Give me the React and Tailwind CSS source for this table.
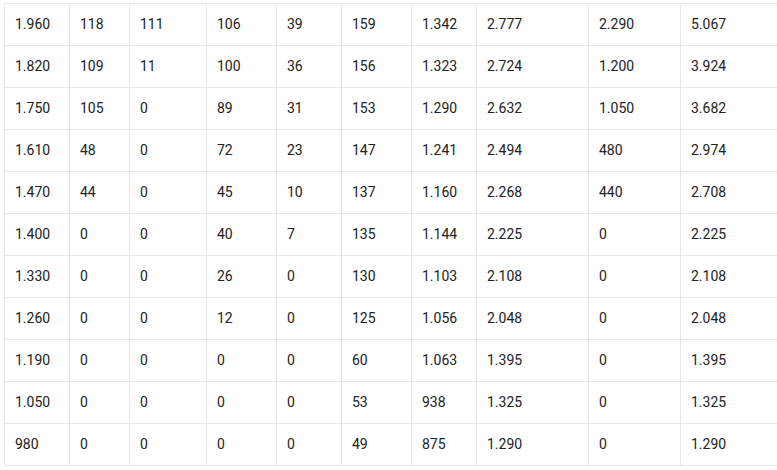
import React from 'react';

const rows = [
  ['1.960', '118', '111', '106', '39', '159', '1.342', '2.777', '2.290', '5.067'],
  ['1.820', '109', '11', '100', '36', '156', '1.323', '2.724', '1.200', '3.924'],
  ['1.750', '105', '0', '89', '31', '153', '1.290', '2.632', '1.050', '3.682'],
  ['1.610', '48', '0', '72', '23', '147', '1.241', '2.494', '480', '2.974'],
  ['1.470', '44', '0', '45', '10', '137', '1.160', '2.268', '440', '2.708'],
  ['1.400', '0', '0', '40', '7', '135', '1.144', '2.225', '0', '2.225'],
  ['1.330', '0', '0', '26', '0', '130', '1.103', '2.108', '0', '2.108'],
  ['1.260', '0', '0', '12', '0', '125', '1.056', '2.048', '0', '2.048'],
  ['1.190', '0', '0', '0', '0', '60', '1.063', '1.395', '0', '1.395'],
  ['1.050', '0', '0', '0', '0', '53', '938', '1.325', '0', '1.325'],
  ['980', '0', '0', '0', '0', '49', '875', '1.290', '0', '1.290'],
];

const App = () => {
  return (
    <div className="w-[777px] h-[470px] overflow-hidden bg-white pl-[4px] pt-[3px]" style={{ fontFamily: 'Roboto, sans-serif' }}>
      <div className="grid w-max grid-cols-[65px_60px_77px_70px_65px_70px_65px_112px_92px_120px] border-b border-[#e8e8e8] text-[14px] text-[#222]">
        {rows.map((row, i) =>
          row.map((cell, j) => (
            <div
              key={i + '-' + j}
              className="h-[42px] flex items-center pl-[10px] border-l border-t border-[#e8e8e8]"
            >
              {cell}
            </div>
          ))
        )}
      </div>
    </div>
  );
};

export default App;
